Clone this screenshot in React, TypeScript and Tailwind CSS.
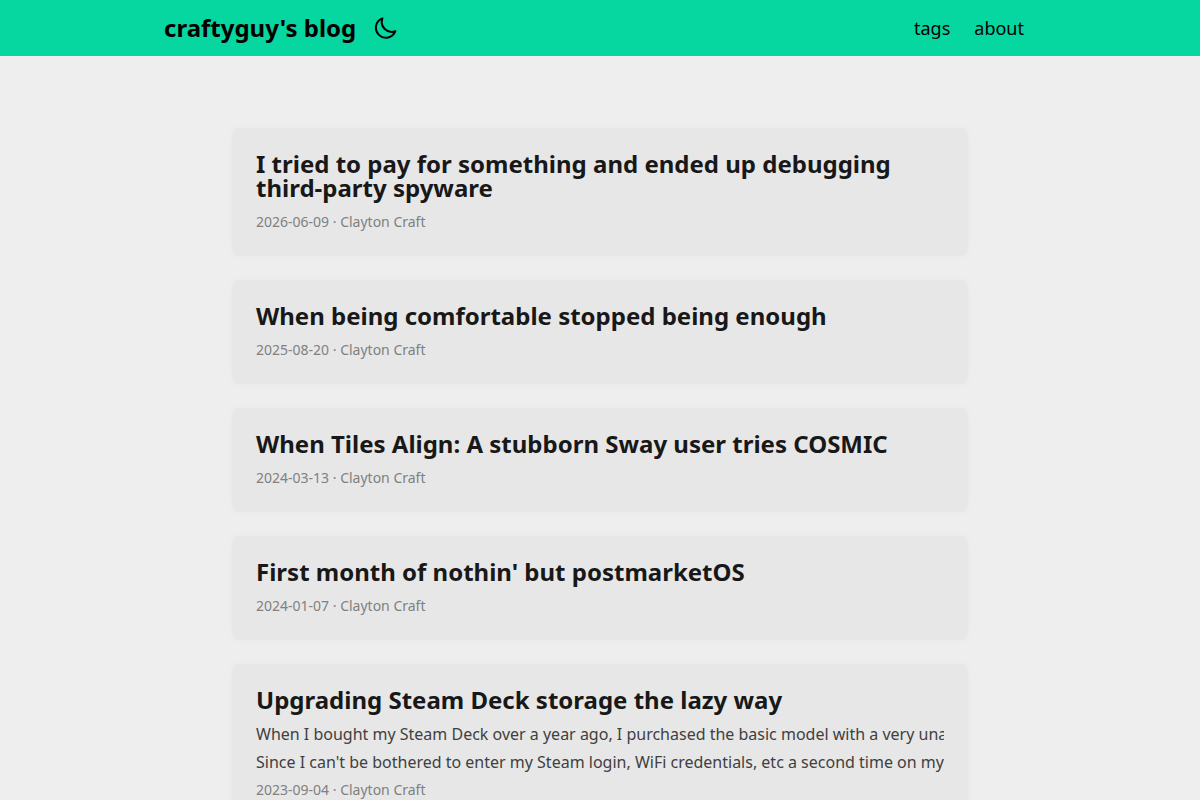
const fontStack = "font-['Noto_Sans','Open_Sans',sans-serif]";

type Post = {
  title: string;
  date: string;
  summary?: string[];
};

const posts: Post[] = [
  { title: "I tried to pay for something and ended up debugging third-party spyware", date: "2026-06-09" },
  { title: "When being comfortable stopped being enough", date: "2025-08-20" },
  { title: "When Tiles Align: A stubborn Sway user tries COSMIC", date: "2024-03-13" },
  { title: "First month of nothin' but postmarketOS", date: "2024-01-07" },
  {
    title: "Upgrading Steam Deck storage the lazy way",
    date: "2023-09-04",
    summary: [
      "When I bought my Steam Deck over a year ago, I purchased the basic model with a very unassuming",
      "Since I can't be bothered to enter my Steam login, WiFi credentials, etc a second time on my Deck",
    ],
  },
];

function MoonIcon() {
  return (
    <svg
      className="size-6"
      viewBox="0 0 24 24"
      fill="none"
      stroke="currentColor"
      strokeWidth="2"
      strokeLinecap="round"
      strokeLinejoin="round"
      aria-hidden="true"
    >
      <path d="M8.4 2.4A10 10 0 1 0 21.3 15.2A10 10 0 0 1 8.4 2.4Z" />
    </svg>
  );
}

function Header() {
  return (
    <header className="bg-[#06d6a0] text-black">
      <nav className="mx-auto flex h-14 max-w-[920px] items-center justify-between pr-9 pl-6">
        <div className="flex items-center">
          <a href="/" className="text-2xl font-bold">
            craftyguy's blog
          </a>
          <button type="button" aria-label="Toggle theme" className="ml-[18px]">
            <MoonIcon />
          </button>
        </div>
        <ul className="flex gap-6 text-lg">
          <li><a href="/tags">tags</a></li>
          <li><a href="/about">about</a></li>
        </ul>
      </nav>
    </header>
  );
}

function PostCard({ post }: { post: Post }) {
  return (
    <article className="rounded-lg bg-[#e7e7e7] px-6 pt-6 pb-5 shadow-[0_0_4px_#e7e7e7]">
      <h2 className="mb-2 text-2xl leading-6 font-bold text-[#181818]">
        <a href="#">{post.title}</a>
      </h2>
      {post.summary && (
        <div className="overflow-hidden text-base leading-7 text-[#404040]">
          {post.summary.map((line) => (
            <p key={line} className="whitespace-nowrap">{line}</p>
          ))}
        </div>
      )}
      <footer className="text-sm leading-7 text-[#808080]">
        <time>{post.date}</time> · Clayton Craft
      </footer>
    </article>
  );
}

export default function App() {
  return (
    <div className={`min-h-screen bg-[#eee] ${fontStack}`}>
      <Header />
      <main className="mx-auto mt-12 flex max-w-[784px] flex-col gap-6 p-6">
        {posts.map((post) => (
          <PostCard key={post.date} post={post} />
        ))}
      </main>
    </div>
  );
}
